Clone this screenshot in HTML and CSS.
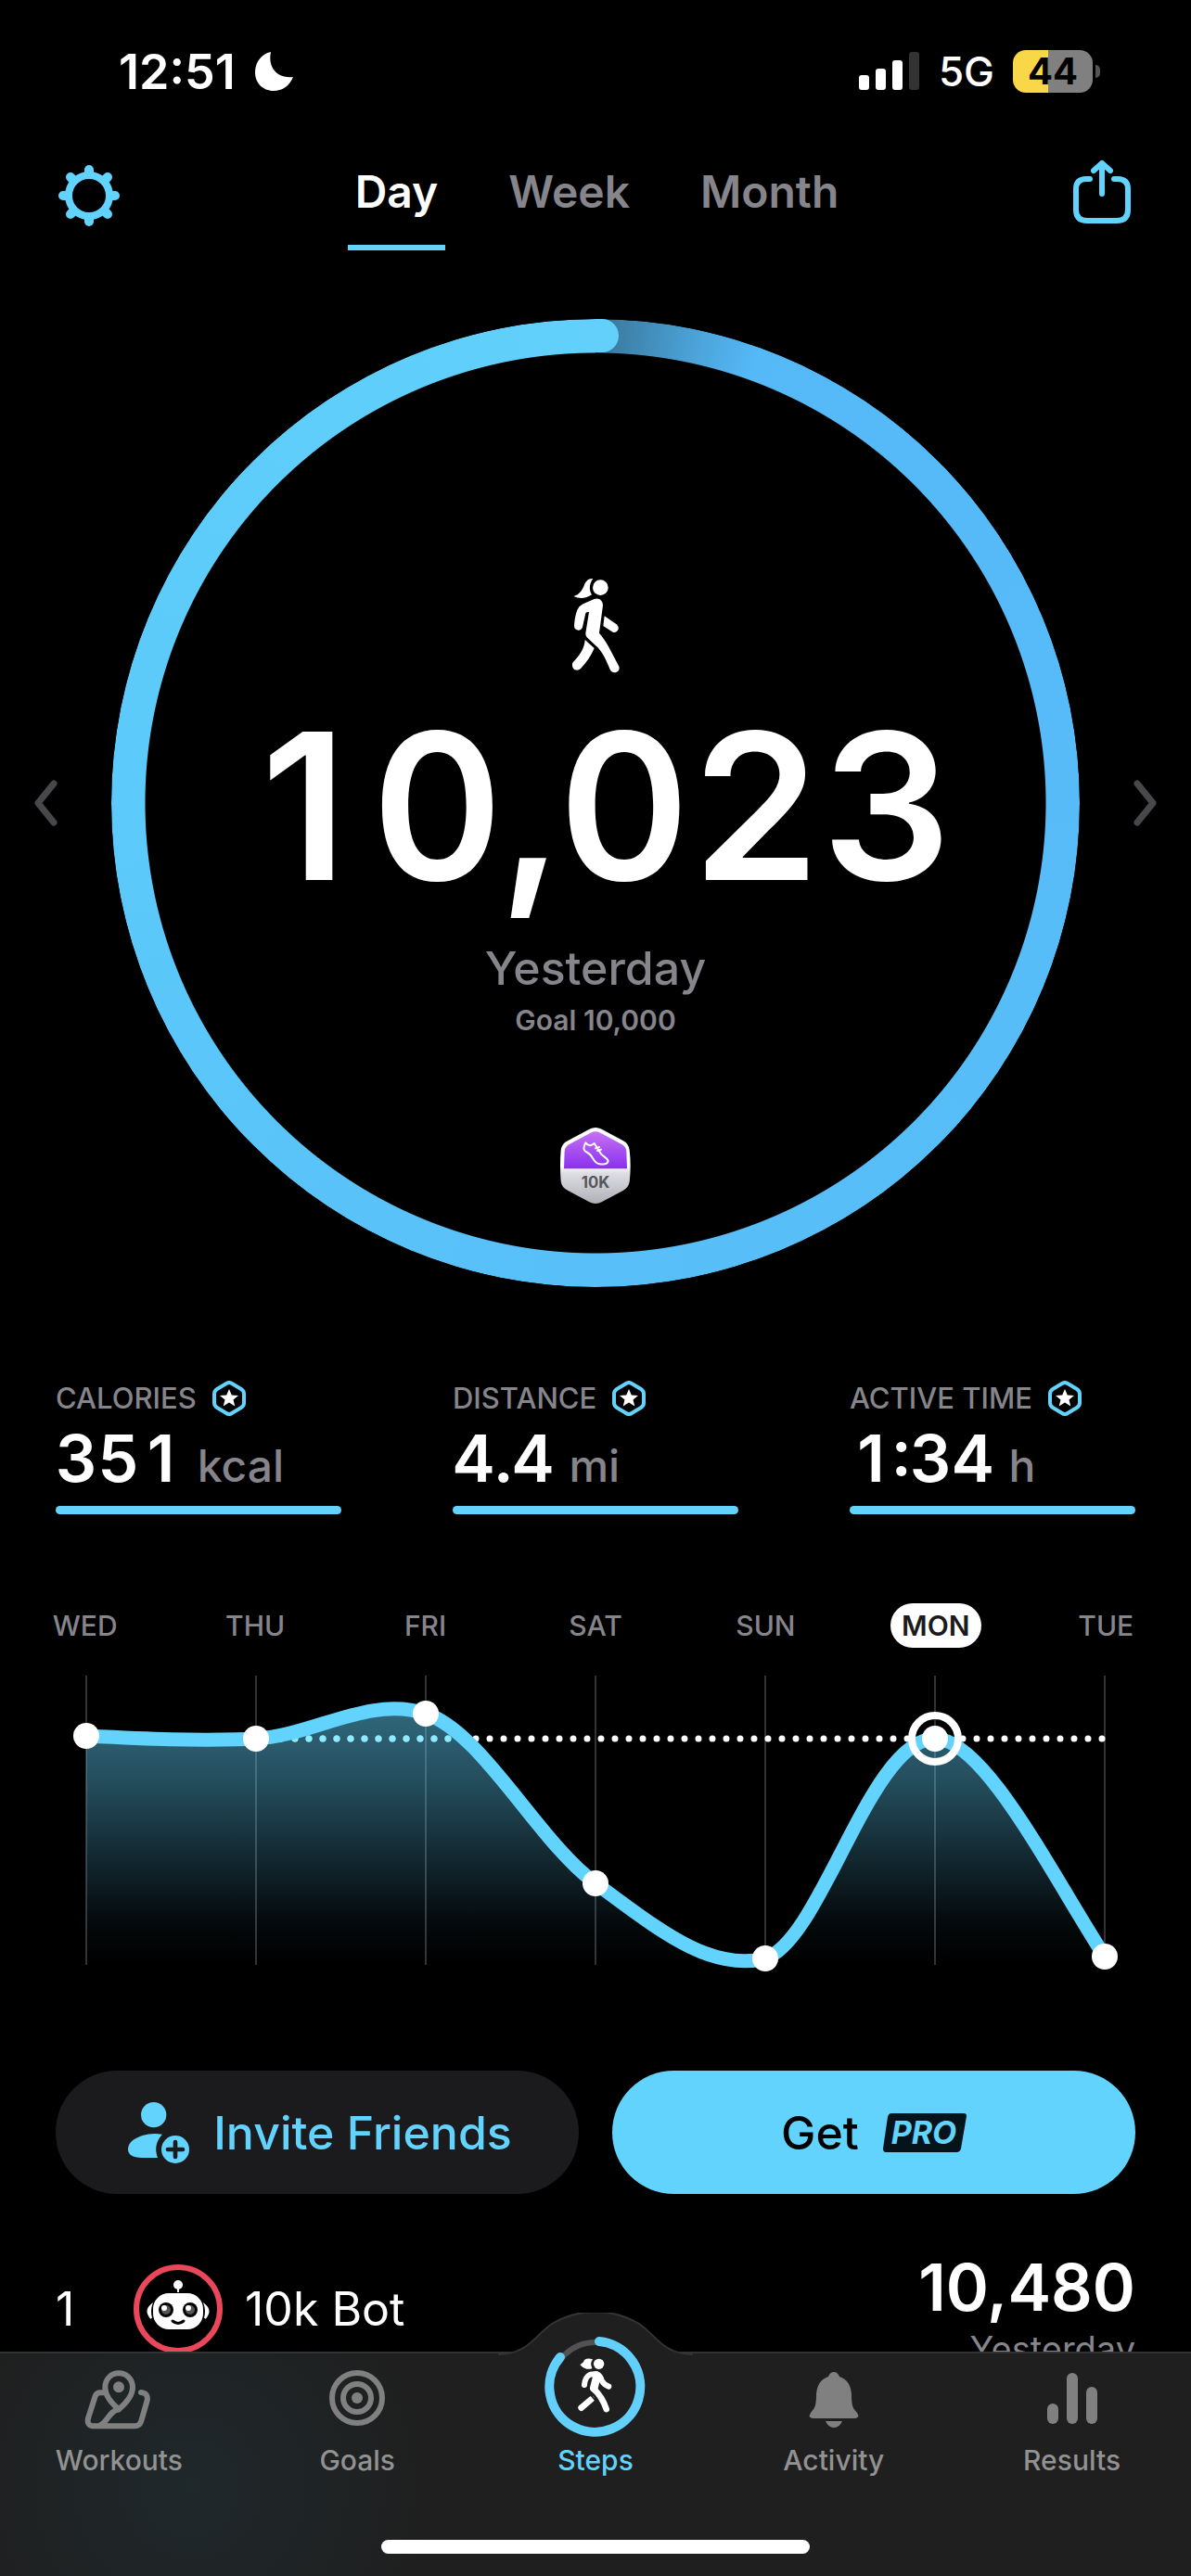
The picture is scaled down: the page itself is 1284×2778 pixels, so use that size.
FILE: index.html
```html
<!DOCTYPE html>
<html lang="en">
<head>
<meta charset="utf-8">
<meta name="viewport" content="width=device-width, initial-scale=1">
<title>Steps</title>
<link rel="stylesheet" href="styles.css">
</head>
<body>
<main class="screen">
  <div class="status">
    <div class="status-side">
      <span class="time">12:51</span>
      <svg width="44" height="44" viewBox="0 0 44 44" aria-hidden="true"><path fill="#fff" d="M18 1C15 15 22 30 42 28C38 38 30 43 21 43C9 43 1 34 1 23C1 12 8 3 18 1Z"/></svg>
    </div>
    <div class="status-side status-right">
      <svg width="66" height="42" viewBox="0 0 66 42" aria-hidden="true"><g fill="#fff"><rect y="25" width="11" height="16" rx="3"/><rect x="18" y="18" width="11" height="23" rx="3"/><rect x="36" y="9" width="11" height="32" rx="3"/></g><rect x="54" width="11" height="41" rx="3" fill="#333"/></svg>
      <span class="network">5G</span>
      <span class="battery"><span class="battery-cell">44</span><span class="battery-nub"></span></span>
    </div>
  </div>

  <header class="header">
    <button class="icon-button" aria-label="Settings">
      <svg width="68" height="68" viewBox="-34 -34 68 68" fill="none" stroke="#62d3fd"><circle r="22" stroke-width="8"/><path stroke-width="10" stroke-linecap="round" d="M0-25V-28M0 25V28M-25 0H-28M25 0H28M18-18L20-20M-18-18L-20-20M18 18L20 20M-18 18L-20 20"/></svg>
    </button>
    <nav class="range">
      <button class="range-tab is-active">Day</button>
      <button class="range-tab">Week</button>
      <button class="range-tab">Month</button>
    </nav>
    <button class="icon-button share" aria-label="Share">
      <svg width="62" height="70" viewBox="0 0 62 70" fill="none" stroke="#62d3fd" stroke-width="6" stroke-linecap="round" stroke-linejoin="round"><path d="M18 21H14Q3 21 3 32V54Q3 66 15 66H47Q59 66 59 54V32Q59 21 48 21H44"/><path d="M31 37V5M22 12L31 4L40 12"/></svg>
    </button>
  </header>

  <section class="hero">
    <button class="step-button" aria-label="Previous day"><svg width="26" height="50" viewBox="0 0 26 50"><path d="M22 4L5 25L22 46"/></svg></button>
    <div class="goal">
      <div class="ring"></div>
      <svg class="ring-cap" viewBox="0 0 1044 1044" aria-hidden="true"><path fill="#62d0fb" d="M521 0H529A18 18 0 0 1 529 36H521Z"/></svg>
      <div class="goal-body">
        <svg width="120" height="130" viewBox="0 0 360 390" fill="#fff" aria-hidden="true">
          <circle cx="196" cy="71" r="25"/>
          <path d="M172 42C158 40 149 49 144 62C136 82 126 94 109 99C128 108 149 107 168 94C158 78 160 58 172 42Z"/>
          <path d="M176 108C192 102 204 114 204 128L192 218C214 242 230 276 256 326C262 344 236 354 227 336C212 298 200 276 180 258L152 232Q147 226 148 218L159 150Q148 148 147 158L138 199C134 214 112 212 111 196C113 170 116 156 122 142Q127 130 140 124Z"/>
          <path d="M209 163L248 190C262 202 250 220 236 215L205 195Z"/>
          <path d="M146 240L176 267C166 292 150 314 132 333C118 346 100 332 106 314C126 292 144 272 146 240Z"/>
        </svg>
        <h1 class="steps-count"><span class="one">1</span>0,023</h1>
        <p class="goal-day">Yesterday</p>
        <p class="goal-target">Goal 10,000</p>
        <svg class="badge" width="76" height="84" viewBox="0 0 228 252" role="img" aria-label="10K badge">
          <defs>
            <linearGradient id="badge-base" x1="0" y1="0" x2="0" y2="1"><stop offset=".5" stop-color="#fff"/><stop offset=".6" stop-color="#dddde3"/><stop offset="1" stop-color="#b0b0b8"/></linearGradient>
            <linearGradient id="badge-top" x1="0" y1="0" x2="0" y2="1"><stop stop-color="#c572f4"/><stop offset="1" stop-color="#8a30ee"/></linearGradient>
          </defs>
          <path fill="url(#badge-base)" d="M94 8Q114-2 134 8L204 46Q222 56 224 76Q230 126 224 178Q222 196 204 206L134 244Q114 254 94 244L24 206Q4 196 2 176Q-2 126 2 76Q4 56 24 46Z"/>
          <path fill="url(#badge-top)" d="M98 20Q114 12 130 20L200 58Q213 66 214 80L216 136H12L14 80Q15 66 28 58Z"/>
          <path fill="none" stroke="#fff" stroke-width="6" stroke-linejoin="round" stroke-linecap="round" d="M82 52C92 66 102 60 110 54L132 88C140 98 154 102 155 112C152 124 134 122 124 120C106 116 106 92 88 84C76 78 72 72 82 52ZM114 70L126 66M120 78L132 74"/>
          <text x="114" y="198" text-anchor="middle" class="badge-text">10K</text>
        </svg>
      </div>
    </div>
    <button class="step-button step-next" aria-label="Next day"><svg width="26" height="50" viewBox="0 0 26 50"><path d="M4 4L21 25L4 46"/></svg></button>
  </section>

  <svg class="defs" width="0" height="0" aria-hidden="true"><symbol id="star" viewBox="0 0 36 38"><path fill="none" stroke="#62d3fd" stroke-width="4" stroke-linejoin="round" d="M15 3Q18 1 21 3L31 9Q34 11 34 14V24Q34 27 31 29L21 35Q18 37 15 35L5 29Q2 27 2 24V14Q2 11 5 9Z"/><path fill="#fff" d="M18 9L20.800 15.500L28 16L22.500 20.500L24.300 27.500L18 23.600L11.700 27.500L13.500 20.500L8 16L15.200 15.500Z"/></symbol></svg>
  <section class="stats">
    <div class="stat">
      <h2 class="stat-name">CALORIES <svg width="36" height="38"><use href="#star"/></svg></h2>
      <p class="stat-value">35<span class="one">1</span><span class="stat-unit">kcal</span></p>
      <div class="stat-bar"></div>
    </div>
    <div class="stat">
      <h2 class="stat-name">DISTANCE <svg width="36" height="38"><use href="#star"/></svg></h2>
      <p class="stat-value">4.4<span class="stat-unit">mi</span></p>
      <div class="stat-bar"></div>
    </div>
    <div class="stat">
      <h2 class="stat-name">ACTIVE TIME <svg width="36" height="38"><use href="#star"/></svg></h2>
      <p class="stat-value"><span class="one">1</span>:34<span class="stat-unit">h</span></p>
      <div class="stat-bar"></div>
    </div>
  </section>

  <section class="week">
    <div class="days">
      <button class="day">WED</button><button class="day">THU</button><button class="day">FRI</button><button class="day">SAT</button><button class="day">SUN</button><button class="day is-selected">MON</button><button class="day">TUE</button>
    </div>
    <svg class="chart" viewBox="0 1790 1284 340" role="img" aria-label="Steps per day">
      <defs>
        <linearGradient id="area" gradientUnits="userSpaceOnUse" x1="0" y1="1840" x2="0" y2="2119"><stop stop-color="#62d3fd" stop-opacity=".5"/><stop offset=".3" stop-color="#62d3fd" stop-opacity=".36"/><stop offset=".6" stop-color="#62d3fd" stop-opacity=".18"/><stop offset=".85" stop-color="#62d3fd" stop-opacity=".04"/><stop offset="1" stop-color="#62d3fd" stop-opacity="0"/></linearGradient>
        <clipPath id="under"><path d="M93 1872C154 1875 215 1878 276 1875S398 1828 459 1848C520 1868 581 1987 642 2031S764 2128 825 2112C886 2092 938 1875 1008 1875C1061 1875 1133 2020 1191 2110V2119H93Z"/></clipPath>
      </defs>
      <path stroke="#333335" stroke-width="2" d="M93 1807V2119M276 1807V2119M459 1807V2119M642 1807V2119M825 1807V2119M1008 1807V2119M1191 1807V2119"/>
      <path fill="none" stroke="#fff" stroke-width="7" stroke-linecap="round" stroke-dasharray="0 15" d="M93 1875H1191"/>
      <g clip-path="url(#under)">
        <rect x="93" y="1790" width="1098" height="329" fill="url(#area)"/>
        <path fill="none" stroke="#8cecff" stroke-width="7" stroke-linecap="round" stroke-dasharray="0 15" d="M93 1875H1191"/>
      </g>
      <path fill="none" stroke="#62d3fd" stroke-width="15" d="M93 1872C154 1875 215 1878 276 1875S398 1828 459 1848C520 1868 581 1987 642 2031S764 2128 825 2112C886 2092 938 1875 1008 1875C1061 1875 1133 2020 1191 2110"/>
      <g fill="#fff"><circle cx="93" cy="1872" r="14"/><circle cx="276" cy="1875" r="14"/><circle cx="459" cy="1848" r="14"/><circle cx="642" cy="2031" r="14"/><circle cx="825" cy="2112" r="14"/><circle cx="1008" cy="1875" r="14"/><circle cx="1191" cy="2110" r="14"/></g>
      <circle cx="1008" cy="1875" r="25" fill="none" stroke="#fff" stroke-width="8"/>
    </svg>
  </section>

  <section class="actions">
    <button class="action action-invite">
      <svg width="66" height="66" viewBox="0 0 198 198" aria-hidden="true"><g fill="#62d3fd"><circle cx="83" cy="41" r="41"/><path d="M111 104Q78 98 46 108Q0 124 0 152Q0 178 44 180H96Q80 138 111 104Z"/><circle cx="153" cy="153" r="45"/></g><path stroke="#1b1b1d" stroke-width="14" stroke-linecap="round" d="M153 129V177M129 153H177"/></svg>
      Invite Friends
    </button>
    <button class="action action-pro">Get
      <svg width="90" height="42" viewBox="0 0 90 42" role="img" aria-label="PRO"><path fill="#04141a" d="M9 0H87Q90 0 90 3L84 38Q83 42 79 42H3Q0 42 0 38L5 4Q6 0 9 0Z"/><text x="44" y="33" text-anchor="middle" class="pro-text">PRO</text></svg>
    </button>
  </section>

  <section class="friend">
    <span class="rank">1</span>
    <svg width="96" height="96" viewBox="-48 -48 96 96" aria-hidden="true"><circle r="45" fill="none" stroke="#ea475b" stroke-width="6"/><g fill="#fff"><circle cy="-26" r="5"/><path d="M-1-24H1V-18H-1Z"/><rect x="-27" y="-17" width="54" height="39" rx="17"/><path d="M-29-4Q-36 2-29 10Q-31 2-29-4ZM29-4Q36 2 29 10Q31 2 29-4Z" stroke="#fff" stroke-width="2"/></g><circle cx="-13" cy="1" r="8"/><circle cx="13" cy="1" r="8"/><g fill="#555"><circle cx="-13" cy="1" r="5"/><circle cx="13" cy="1" r="5"/></g><g fill="#fff"><circle cx="-15" cy="-1" r="3"/><circle cx="11" cy="-1" r="3"/></g><path d="M-6 13Q0 18 6 13" fill="none" stroke="#000" stroke-width="3" stroke-linecap="round"/></svg>
    <span class="friend-name">10k Bot</span>
    <div class="score"><strong class="score-value">10,480</strong><span class="score-day">Yesterday</span></div>
  </section>
</main>

<nav class="tabbar">
  <svg class="hump" width="210" height="48" viewBox="0 0 210 48" aria-hidden="true"><path fill="#1f1f1f" d="M0 45C32 45 38 26 58 12C86-5 124-5 152 12C172 26 178 45 210 45V48H0Z"/><path fill="none" stroke="#333" stroke-width="2" d="M0 45C32 45 38 26 58 12C86-5 124-5 152 12C172 26 178 45 210 45"/></svg>
  <div class="tabs">
    <a class="tab" href="#workouts">
      <svg width="80" height="80" viewBox="90 38 240 240" fill="none" stroke="#808080" stroke-width="18" stroke-linecap="round" stroke-linejoin="round"><path d="M210 195C188 176 166 152 166 124C166 96 186 78 210 78S255 96 255 124C255 152 232 176 210 195Z"/><path d="M160 141H150Q138 141 134 152L111 224Q106 246 126 249H262Q278 249 283 232L302 166Q306 142 282 140M210 195C176 200 172 246 142 249"/><circle cx="210" cy="123" r="9"/></svg>
      Workouts</a>
    <a class="tab" href="#goals">
      <svg width="80" height="80" viewBox="-40 -40 80 80" fill="none" stroke="#808080" stroke-width="6"><circle r="27"/><circle r="15"/><circle r="6" fill="#808080" stroke="none"/></svg>
      Goals</a>
    <a class="tab is-current" href="#steps">
      <svg class="tab-ring" width="120" height="112" viewBox="0 0 120 112"><circle cx="60" cy="60" r="48" fill="none" stroke="#525254" stroke-width="6"/><path fill="none" stroke="#62d0fb" stroke-width="10" stroke-linecap="round" d="M64 11A49 49 0 1 1 22 28"/>
        <g transform="translate(-61 -88) scale(.3333)"><circle cx="374" cy="370" r="17" fill="#fff"/><path fill="#fff" d="M354 355Q328 348 324 364L313 373Q320 382 334 386Q350 388 352 383Q344 370 354 355Z"/><g fill="none" stroke="#fff" stroke-linecap="round" stroke-linejoin="round"><path stroke-width="18" d="M327 438Q329 412 346 404L366 402Q380 408 383 424Q392 438 406 443"/><path stroke-width="26" d="M368 408L358 448"/><path stroke-width="20" d="M356 450Q384 474 398 516"/><path stroke-width="20" d="M350 484L317 512"/></g><path stroke="#1f1f1f" stroke-width="5" d="M338 460L366 492"/></g></svg>
      Steps</a>
    <a class="tab" href="#activity">
      <svg width="80" height="80" viewBox="0 0 80 80" fill="#808080"><path d="M40 12Q44 12 46 17Q58 21 59 36C59 50 61 51 65 56Q69 62 61 62H19Q11 62 15 56C19 51 21 50 21 36Q22 21 34 17Q36 12 40 12ZM31 65H49Q46 72 40 72T31 65Z"/></svg>
      Activity</a>
    <a class="tab" href="#results">
      <svg width="80" height="80" viewBox="0 0 80 80" fill="#808080"><rect x="13" y="46" width="12" height="22" rx="6"/><rect x="34" y="13" width="12" height="55" rx="6"/><rect x="55" y="28" width="12" height="40" rx="6"/></svg>
      Results</a>
  </div>
  <div class="home-indicator"></div>
</nav>
</body>
</html>
```
FILE: styles.css
```css
* { box-sizing: border-box; margin: 0; }
body {
  height: 100vh;
  display: flex;
  flex-direction: column;
  background: #000;
  color: #fff;
  font-family: Inter, "Liberation Sans", sans-serif;
}
button {
  padding: 0;
  border: 0;
  background: none;
  color: inherit;
  font: inherit;
  cursor: pointer;
}
a { color: inherit; text-decoration: none; }
svg { display: block; flex: none; }

.screen {
  flex: 1;
  min-height: 0;
  overflow-y: auto;
  scrollbar-width: none;
}

/* Status bar */
.status {
  height: 154px;
  padding: 0 98px 0 128px;
  display: flex;
  align-items: center;
  justify-content: space-between;
}
.status-side { display: flex; align-items: center; gap: 20px; }
.time { font-size: 52px; font-weight: 600; }
.network { font-size: 44px; font-weight: 500; }
.battery { display: flex; align-items: center; gap: 3px; }
.battery-cell {
  width: 86px;
  height: 46px;
  border-radius: 14px;
  background: linear-gradient(90deg, #f8d749 44%, #808080 44%);
  color: #000;
  font-size: 40px;
  font-weight: 700;
  line-height: 46px;
  text-align: center;
}
.battery-nub { width: 5px; height: 14px; border-radius: 0 5px 5px 0; background: #555; }

/* Header */
.header {
  padding: 18px 65px 0 62px;
  display: flex;
  justify-content: space-between;
}
.icon-button { height: 78px; }
.share { height: 70px; }
.range { padding-top: 5px; display: flex; gap: 60px; }
.range-tab {
  padding: 0 8px 33px;
  background: no-repeat bottom / 100% 6px;
  color: #86858b;
  font-size: 48px;
  font-weight: 600;
  line-height: 60px;
}
.range-tab.is-active {
  background-image: linear-gradient(#62d3fd, #62d3fd);
  color: #fff;
}

/* Progress ring */
.hero { margin-top: 74px; display: flex; }
.step-button {
  flex: none;
  width: 120px;
  display: flex;
  align-items: center;
  padding: 0 36px;
}
.step-next { justify-content: flex-end; }
.step-button path {
  fill: none;
  stroke: #48484b;
  stroke-width: 7;
  stroke-linecap: round;
  stroke-linejoin: round;
}
.goal {
  flex: 1;
  min-width: 0;
  display: grid;
  grid-template-columns: minmax(0, 1fr);
  align-items: start;
}
.ring, .ring-cap, .goal-body { grid-area: 1 / 1; position: relative; }
.ring {
  aspect-ratio: 1;
  border-radius: 50%;
  background: conic-gradient(#356f93 0deg, #3d80a8 3deg, #4ba2d7 12deg, #55b9f8 20deg, #58bff8 180deg, #5ccafa 270deg, #62d0fb 360deg);
  -webkit-mask: radial-gradient(closest-side, transparent calc(100% - 37px), #000 calc(100% - 36px));
  mask: radial-gradient(closest-side, transparent calc(100% - 37px), #000 calc(100% - 36px));
}
.ring-cap { width: 100%; }
.goal-body {
  padding-top: 266px;
  display: flex;
  flex-direction: column;
  align-items: center;
}
.steps-count, .stat-value { font-variant-numeric: tabular-nums; white-space: nowrap; }
/* A plain 1, without its foot, in a cell as wide as the other digits */
.one {
  display: inline-block;
  width: 1ch;
  font-variant-numeric: normal;
  text-align: center;
}
.steps-count {
  margin-top: 19px;
  font-size: 220px;
  font-weight: 600;
  line-height: 220px;
}
.goal-day {
  margin-top: 35px;
  color: #86858b;
  font-size: 50px;
  font-weight: 500;
  line-height: 60px;
}
.goal-target {
  margin-top: 6px;
  color: #86858b;
  font-size: 30px;
  font-weight: 600;
  line-height: 40px;
}
.badge { margin-top: 95px; }
.badge-text { fill: #55565c; font-size: 50px; font-weight: 700; }

/* Stats */
.defs { position: absolute; }
.stats {
  margin-top: 100px;
  padding: 0 60px;
  display: grid;
  grid-template-columns: repeat(3, 1fr);
  gap: 120px;
}
.stat-name {
  display: flex;
  align-items: center;
  gap: 17px;
  color: #86858b;
  font-size: 31px;
  font-weight: 500;
  line-height: 40px;
  white-space: nowrap;
}
.stat-value {
  margin-top: 5px;
  font-size: 70px;
  font-weight: 600;
  line-height: 80px;
}
.stat-unit { margin-left: 16px; color: #86858b; font-size: 48px; font-weight: 500; line-height: 60px; }
.stat-bar { height: 9px; margin-top: 11px; border-radius: 5px; background: #62d3fd; }

/* Week chart */
.week { margin-top: 96px; }
.days {
  display: grid;
  grid-template-columns: repeat(7, 1fr);
  justify-items: center;
}
.day {
  height: 48px;
  padding: 0 12px;
  border-radius: 24px;
  color: #86858b;
  font-size: 30px;
  font-weight: 500;
}
.day.is-selected { background: #fff; color: #1b1b1d; font-weight: 600; }
.chart { width: 100%; margin-top: 13px; }

/* Actions */
.actions {
  margin-top: 103px;
  padding: 0 60px;
  display: grid;
  grid-template-columns: 1fr 1fr;
  gap: 36px;
}
.action {
  height: 133px;
  border-radius: 67px;
  display: flex;
  align-items: center;
  justify-content: center;
  gap: 26px;
  font-size: 50px;
  font-weight: 500;
}
.action-invite { padding-left: 6px; background: #1b1b1d; color: #62d3fd; }
.action-pro { background: #62d3fd; color: #000; }
.pro-text { fill: #62d3fd; font-size: 34px; font-weight: 700; font-style: italic; }

/* Leaderboard */
.friend {
  margin-top: 59px;
  padding: 0 60px;
  display: flex;
  align-items: center;
  font-size: 50px;
}
.rank { width: 84px; }
.friend-name { flex: 1; margin-left: 24px; }
.score { display: flex; flex-direction: column; gap: 2px; text-align: right; }
.score-value { font-size: 70px; font-weight: 600; line-height: 84px; }
.score-day { color: #86858b; font-size: 38px; line-height: 44px; }

/* Tab bar */
.tabbar {
  position: relative;
  border-top: 2px solid #333;
  background: radial-gradient(circle at 16% 60%, #1f282b, transparent 260px), #1f1f1f;
}
.hump { position: absolute; left: 50%; bottom: 100%; margin: 0 0 -4px -105px; }
.tabs {
  position: relative;
  height: 135px;
  display: flex;
  align-items: flex-end;
}
.tab {
  flex: 1;
  display: flex;
  flex-direction: column;
  align-items: center;
  gap: 7px;
  color: #929292;
  font-size: 30px;
  font-weight: 500;
  line-height: 40px;
}
.tab.is-current { color: #62d3fd; }
.tab-ring { overflow: visible; }
.home-indicator {
  width: 36%;
  height: 15px;
  margin: 66px auto 24px;
  border-radius: 8px;
  background: #fff;
}
```
